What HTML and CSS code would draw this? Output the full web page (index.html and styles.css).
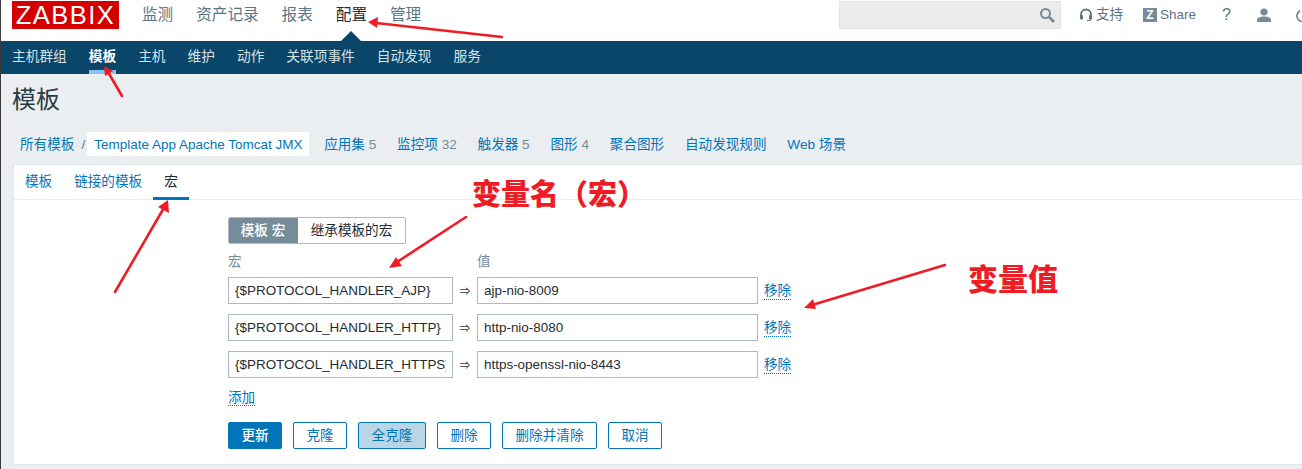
FILE: index.html
```html
<!DOCTYPE html>
<html lang="zh-CN">
<head>
<meta charset="utf-8">
<title>模板</title>
<link rel="stylesheet" href="styles.css">
</head>
<body>
<div class="page">
  <header class="top">
    <div class="logo">ZABBIX</div>
    <nav class="mainnav">
      <a>监测</a><a>资产记录</a><a>报表</a><a class="on">配置</a><a>管理</a>
    </nav>
    <div class="tools">
      <div class="search">
        <svg class="ic-search" viewBox="0 0 16 16" width="16" height="16"><circle cx="6.5" cy="6.5" r="4.5" fill="none" stroke="#768d99" stroke-width="2"/><path d="M10 10l5 5" stroke="#768d99" stroke-width="2.6"/></svg>
      </div>
      <a class="tool t-support"><svg viewBox="0 0 14 14" width="14" height="14"><path d="M2 9V6.5a5 5 0 0 1 10 0V9" fill="none" stroke="#5b7482" stroke-width="1.8"/><rect x="1" y="7" width="3" height="4.5" rx="1" fill="#5b7482"/><rect x="10" y="7" width="3" height="4.5" rx="1" fill="#5b7482"/><path d="M11.5 11v1.5H8" fill="none" stroke="#5b7482" stroke-width="1"/></svg>支持</a>
      <a class="tool t-share"><span class="zbox">Z</span>Share</a>
      <a class="tool t-help">?</a>
      <a class="tool t-user"><svg viewBox="0 0 16 14" width="16" height="14"><circle cx="8" cy="4" r="3.6" fill="#768d99"/><path d="M1 14v-2c0-2 3-3.4 7-3.4s7 1.4 7 3.4v2z" fill="#768d99"/></svg></a>
      <a class="tool t-power"><svg viewBox="0 0 14 14" width="14" height="14"><path d="M4 2.6a6 6 0 1 0 6 0" fill="none" stroke="#768d99" stroke-width="1.8"/></svg></a>
    </div>
  </header>
  <nav class="subnav">
    <a>主机群组</a><a class="on">模板</a><a>主机</a><a>维护</a><a>动作</a><a>关联项事件</a><a>自动发现</a><a>服务</a>
  </nav>
  <main class="body">
    <h1 class="title">模板</h1>
    <div class="crumbs">
      <a class="c-all">所有模板</a><span class="sep">/</span><a class="pill">Template App Apache Tomcat JMX</a>
      <div class="c-links">
        <span><a>应用集</a> 5</span><span><a>监控项</a> 32</span><span><a>触发器</a> 5</span><span><a>图形</a> 4</span><a>聚合图形</a><a>自动发现规则</a><a>Web 场景</a>
      </div>
    </div>
    <section class="panel">
      <div class="tabs"><a>模板</a><a>链接的模板</a><a class="on">宏</a></div>
      <div class="form">
        <div class="toggle"><span class="sel">模板 宏</span><span>继承模板的宏</span></div>
        <div class="grid">
          <div class="lbl">宏</div><div></div><div class="lbl">值</div><div></div>
          <input class="inp" value="{$PROTOCOL_HANDLER_AJP}" readonly><span class="to">⇒</span><input class="inp" value="ajp-nio-8009" readonly><a class="dot">移除</a>
          <input class="inp" value="{$PROTOCOL_HANDLER_HTTP}" readonly><span class="to">⇒</span><input class="inp" value="http-nio-8080" readonly><a class="dot">移除</a>
          <input class="inp" value="{$PROTOCOL_HANDLER_HTTPS}" readonly><span class="to">⇒</span><input class="inp" value="https-openssl-nio-8443" readonly><a class="dot">移除</a>
        </div>
        <div class="add"><a class="dot">添加</a></div>
        <div class="btns">
          <button class="btn primary">更新</button><button class="btn w54">克隆</button><button class="btn act">全克隆</button><button class="btn w54">删除</button><button class="btn w95">删除并清除</button><button class="btn w54">取消</button>
        </div>
      </div>
    </section>
  </main>
  <div class="note n1">变量名（宏）</div>
  <div class="note n2">变量值</div>
  <svg class="arrows" viewBox="0 0 1302 469" width="1302" height="469">
    <g fill="none" stroke="#ee1c25" stroke-width="2.6" stroke-linecap="round">
      <path d="M502 37L376 23"/><path d="M122 96L108 72"/><path d="M115 292L165 206"/><path d="M466 217L394 264"/><path d="M945 265L812 305"/>
    </g>
    <g fill="#ee1c25">
      <path d="M368 22L378 17L377 28z"/><path d="M104 66L113 71L105 76z"/><path d="M168 200L169 213L158 207z"/><path d="M389 268L396 257L402 266z"/><path d="M804 308L813 299L816 309z"/>
    </g>
  </svg>
</div>
</body>
</html>
```
FILE: styles.css
```css
* { box-sizing: border-box; }
html, body { margin: 0; padding: 0; background: #ebeef0; }
body { font-family: "Liberation Sans", "Noto Sans CJK SC", sans-serif; font-size: 13.6px; line-height: 20px; color: #1f2c33; overflow: hidden; }
.page { position: relative; width: 1302px; height: 469px; overflow: hidden; border-left: 1px solid #3b3b3b; }
a { color: #0275b8; text-decoration: none; }

.top { display: flex; height: 41px; background: #fff; padding: 1px 0 0 11px; }
.logo { width: 107px; height: 28px; background: #d40000; color: #fff; font-size: 25.5px; line-height: 29px; text-align: center; letter-spacing: 1.5px; }
.mainnav { display: flex; gap: 23px; margin-left: 23px; font-size: 15.6px; line-height: 27px; }
.mainnav a { color: #5b7482; position: relative; height: 40px; }
.mainnav a.on { color: #1f2c33; }
.mainnav a.on::after { content: ""; position: absolute; left: 5px; bottom: 0; border: 10px solid transparent; border-top: 0; border-bottom-color: #0a466a; }
.tools { display: flex; margin-left: auto; height: 28px; align-items: center; color: #5b7482; }
.tool { color: #5b7482; display: flex; align-items: center; }
.search { width: 222px; height: 28px; margin-right: 18px; background: #ebebeb; border: 1px solid #e2e2e2; display: flex; align-items: center; justify-content: flex-end; padding-right: 5px; }
.t-support { gap: 3px; width: 64px; font-size: 13.5px; }
.t-share { width: 72px; font-size: 13.5px; gap: 3px; }
.zbox { width: 14px; height: 14px; background: #768d99; color: #fff; font-size: 12px; font-weight: bold; line-height: 14px; text-align: center; }
.t-help { width: 41px; font-size: 16px; padding-left: 7px; }
.t-user { width: 40px; }
.t-power { width: 10px; overflow: hidden; margin-right: -4px; }
.t-power svg { flex: none; }

.subnav { display: flex; gap: 22px; height: 33px; background: #0a466a; padding-left: 11px; line-height: 32px; font-size: 13.7px; }
.subnav a { color: #d5e3ec; height: 33px; }
.subnav a.on { color: #fff; font-weight: bold; box-shadow: inset 0 -4px 0 #84c4ef; }

.body { padding-left: 12px; }
.title { margin: 0 0 0 -1px; height: 58px; padding-top: 9px; font-size: 24px; line-height: 34px; font-weight: normal; color: #2b3a42; }
.crumbs { display: flex; align-items: flex-start; height: 25px; padding-left: 7px; line-height: 25px; }
.sep { margin: 0 2px 0 7px; color: #5b7482; }
.pill { background: #fff; border-radius: 2px; width: 222px; height: 24px; line-height: 25px; font-size: 13.5px; padding-left: 7px; white-space: nowrap; }
.c-links { display: flex; gap: 20.8px; margin-left: 15px; color: #768d99; }
.panel { margin-top: 7px; height: 301px; background: #fff; border: 1px solid #dfe4e7; border-right: 0; }
.tabs { display: flex; gap: 22px; height: 35px; padding-left: 11px; border-bottom: 1px solid #ebeef0; line-height: 34px; }
.tabs a { height: 35px; }
.tabs a.on { color: #1f2c33; padding: 0 11px; margin-right: -11px; margin-left: -11px; box-shadow: inset 0 -3px 0 #0275b8; }
.form { padding: 17px 0 0 214px; }
.toggle { display: flex; height: 27px; width: 178px; border: 1px solid #acbbc3; border-radius: 2px; line-height: 25px; text-align: center; overflow: hidden; }
.toggle span { flex: 1; }
.toggle .sel { flex: none; width: 70px; background: #768d99; color: #fff; font-weight: 500; margin: -1px 0 -1px -1px; line-height: 27px; }
.grid { display: grid; grid-template-columns: 225px 24px 281px auto; grid-template-rows: 16px repeat(3, 27px); row-gap: 10px; margin-top: 7px; align-items: center; justify-items: start; }
.lbl { color: #768d99; height: 16px; line-height: 22px; }
.inp { width: 100%; height: 27px; border: 1px solid #acbbc3; padding: 0 6px; font: inherit; font-size: 13.45px; color: #1f2c33; background: #fff; outline: 0; border-radius: 0; }
.to { justify-self: center; font-size: 10.5px; }
.dot { border-bottom: 1px dotted #0275b8; margin-left: 6px; line-height: 17px; }
.add { margin-top: 10px; height: 25px; }
.add .dot { margin-left: 0; }
.btns { display: flex; gap: 11px; margin-top: 9px; }
.btn { height: 27px; padding: 0; font: inherit; color: #0275b8; background: #fff; border: 1px solid #0275b8; border-radius: 2px; }
.w54 { width: 54px; }
.w95 { width: 95px; }
.primary { width: 54px; background: #0275b8; color: #fff; font-weight: 500; }
.act { background: #b9d5e6; width: 68px; }

.note { position: absolute; color: #ee1c25; font-family: "Noto Sans CJK SC", sans-serif; font-weight: 900; white-space: nowrap; }
.n1 { left: 471px; top: 171px; font-size: 29px; line-height: 42px; }
.n2 { left: 967px; top: 256px; font-size: 30px; line-height: 42px; }
.arrows { position: absolute; left: -1px; top: 0; pointer-events: none; }
```
